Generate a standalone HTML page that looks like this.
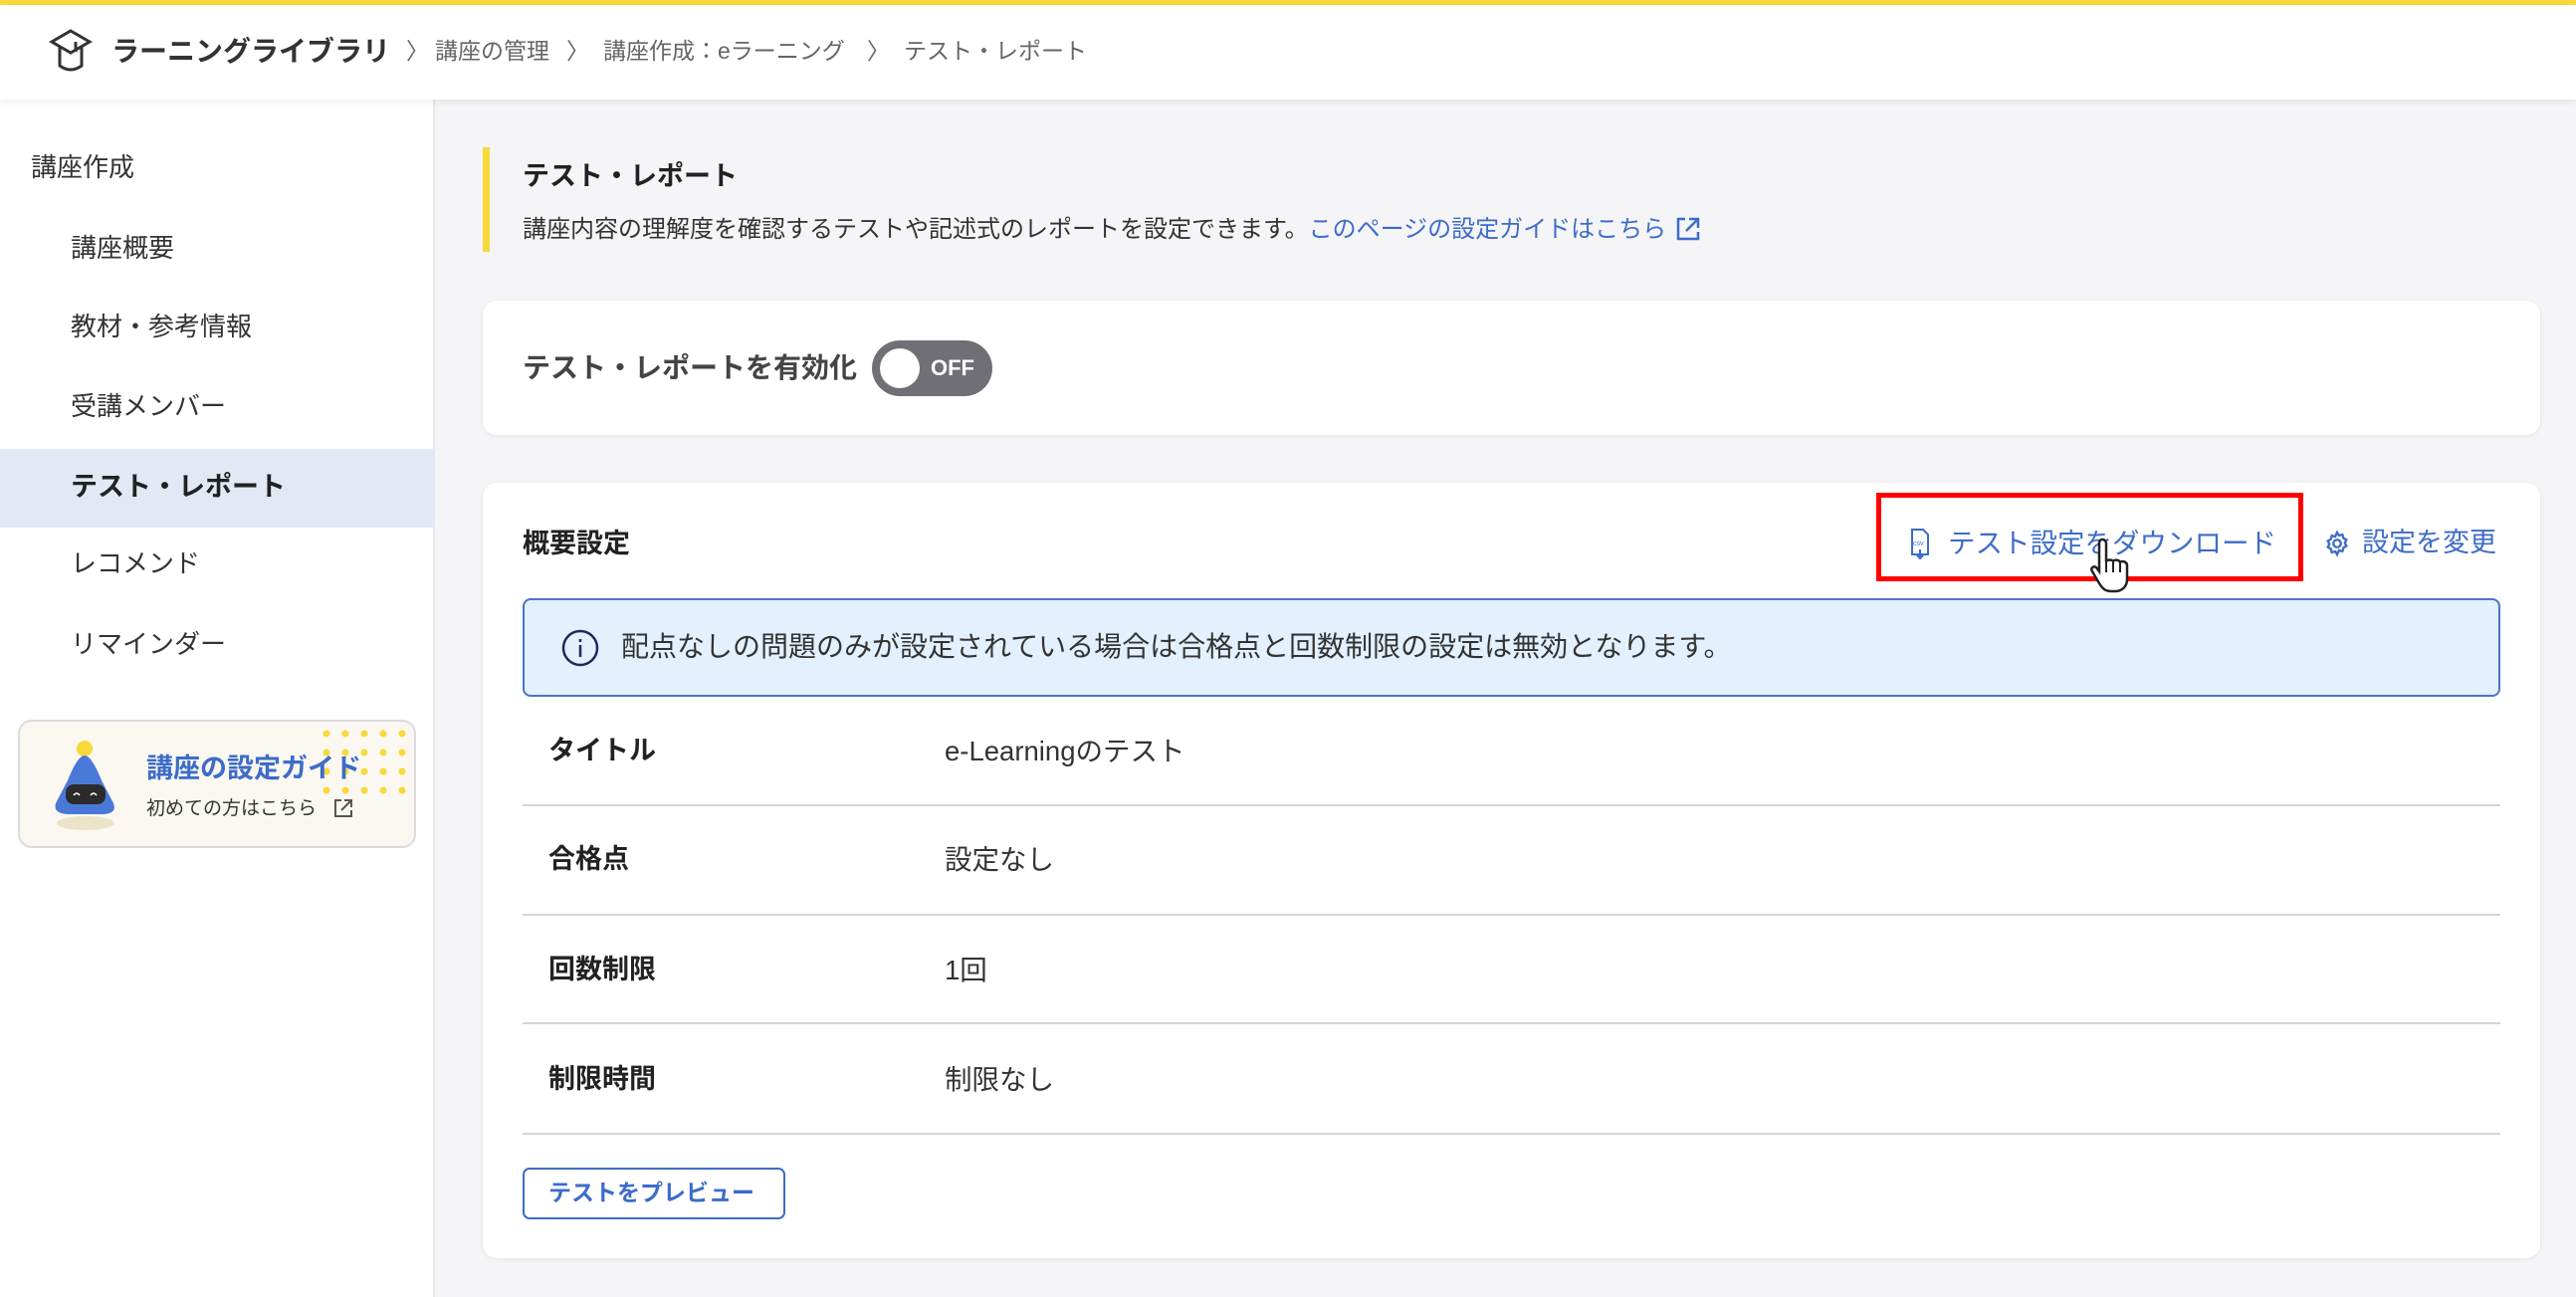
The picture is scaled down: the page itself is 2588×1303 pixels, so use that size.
<!DOCTYPE html>
<html><head><meta charset="utf-8"><style>
*{margin:0;padding:0;box-sizing:border-box}
body{width:2588px;height:1303px;overflow:hidden;background:#f5f5f7;font-family:"Liberation Sans","Noto Sans CJK JP",sans-serif;color:#222;position:relative}
.a{position:absolute;white-space:nowrap}
.t{line-height:1}
.bc{font-size:23px;color:#666;z-index:3;top:40px}
</style></head><body>
<div class="a" style="left:0;top:0;width:2588px;height:5px;background:#f7d93c"></div>
<div class="a" style="left:0;top:5px;width:2588px;height:95px;background:#fff;box-shadow:0 2px 6px rgba(0,0,0,.08);z-index:2"></div>
<svg class="a" style="left:48px;top:28px;z-index:3" width="46" height="48" viewBox="0 0 46 48" fill="none" stroke="#333" stroke-width="3"><path d="M23 3 L42 14 L23 25 L4 14 Z"/><path d="M12 19 V38 Q23 46 34 38 V19"/><path d="M28 14 V24" /></svg>
<div class="a t" style="left:112px;top:38px;font-size:28px;font-weight:bold;color:#333;z-index:3">ラーニングライブラリ</div>
<div class="a t bc" style="left:408px">〉</div>
<div class="a t bc" style="left:437px">講座の管理</div>
<div class="a t bc" style="left:569px">〉</div>
<div class="a t bc" style="left:606px">講座作成：eラーニング</div>
<div class="a t bc" style="left:871px">〉</div>
<div class="a t bc" style="left:908px">テスト・レポート</div>

<div class="a" style="left:0;top:100px;width:437px;height:1203px;background:#fff;border-right:2px solid #e8e8ea"></div>
<div class="a t" style="left:31px;top:155px;font-size:26px;color:#333">講座作成</div>
<div class="a t" style="left:71px;top:236px;font-size:26px;color:#333">講座概要</div>
<div class="a t" style="left:71px;top:315px;font-size:26px;color:#333">教材・参考情報</div>
<div class="a t" style="left:71px;top:395px;font-size:26px;color:#333">受講メンバー</div>
<div class="a" style="left:0;top:451px;width:437px;height:79px;background:#e3e8f5"></div>
<div class="a t" style="left:71px;top:476px;font-size:27px;font-weight:bold;color:#222">テスト・レポート</div>
<div class="a t" style="left:71px;top:553px;font-size:26px;color:#333">レコメンド</div>
<div class="a t" style="left:71px;top:634px;font-size:26px;color:#333">リマインダー</div>
<div class="a" style="left:18px;top:723px;width:400px;height:129px;background:#faf8f0;border:2px solid #dcdce0;border-radius:14px;overflow:hidden">
<svg class="a" style="left:300px;top:4px" width="100" height="80"><g fill="#f7d93c"><circle cx="8" cy="8" r="3.5"/><circle cx="27" cy="8" r="3.5"/><circle cx="46" cy="8" r="3.5"/><circle cx="65" cy="8" r="3.5"/><circle cx="84" cy="8" r="3.5"/><circle cx="8" cy="27" r="3.5"/><circle cx="27" cy="27" r="3.5"/><circle cx="46" cy="27" r="3.5"/><circle cx="65" cy="27" r="3.5"/><circle cx="84" cy="27" r="3.5"/><circle cx="8" cy="46" r="3.5"/><circle cx="27" cy="46" r="3.5"/><circle cx="46" cy="46" r="3.5"/><circle cx="65" cy="46" r="3.5"/><circle cx="84" cy="46" r="3.5"/><circle cx="8" cy="65" r="3.5"/><circle cx="27" cy="65" r="3.5"/><circle cx="46" cy="65" r="3.5"/><circle cx="65" cy="65" r="3.5"/><circle cx="84" cy="65" r="3.5"/></g></svg>
<svg class="a" style="left:28px;top:14px" width="80" height="100"><ellipse cx="38" cy="88" rx="29" ry="7" fill="#ece4c8"/><circle cx="37" cy="13" r="8" fill="#f7d93c"/><path d="M37 20 Q30 20 20 45 L8 68 Q5 78 20 79 L56 79 Q70 78 66 68 L54 45 Q44 20 37 20Z" fill="#4a78d6"/><rect x="18" y="49" width="40" height="20" rx="8" fill="#2b2b2b"/><path d="M26 60 q3-4 6 0 M43 60 q3-4 6 0" stroke="#fff" stroke-width="1.5" fill="none"/></svg>
<div class="a t" style="left:127px;top:34px;font-size:27px;font-weight:bold;color:#3d6cc9">講座の設定ガイド</div>
<div class="a t" style="left:127px;top:78px;font-size:19px;color:#333">初めての方はこちら</div>
<svg class="a" style="left:314px;top:76px" width="22" height="22" fill="none" stroke="#555" stroke-width="2"><path d="M9 3H3v16h16v-6M12 3h7v7M19 3 9 13"/></svg>
</div>

<div class="a" style="left:485px;top:148px;width:7px;height:105px;background:#f7d93c"></div>
<div class="a t" style="left:525px;top:164px;font-size:27px;font-weight:bold;color:#222">テスト・レポート</div>
<div class="a t" style="left:525px;top:219px;font-size:24px;color:#333">講座内容の理解度を確認するテストや記述式のレポートを設定できます。<span style="color:#3d6cc9">このページの設定ガイドはこちら</span></div>
<svg class="a" style="left:1682px;top:216px" width="28" height="28" fill="none" stroke="#3d6cc9" stroke-width="2.5"><path d="M11 4H4v20h20v-7M15 4h9v9M24 4 12 16"/></svg>

<div class="a" style="left:485px;top:302px;width:2067px;height:135px;background:#fff;border-radius:14px;box-shadow:0 1px 4px rgba(0,0,0,.08)"></div>
<div class="a t" style="left:525px;top:356px;font-size:28px;font-weight:bold;color:#444">テスト・レポートを有効化</div>
<div class="a" style="left:876px;top:342px;width:121px;height:56px;background:#6f6f75;border-radius:28px"></div>
<div class="a" style="left:884px;top:350px;width:40px;height:40px;background:#fff;border-radius:50%"></div>
<div class="a t" style="left:935px;top:359px;font-size:22px;font-weight:bold;color:#fff">OFF</div>

<div class="a" style="left:485px;top:485px;width:2067px;height:779px;background:#fff;border-radius:14px;box-shadow:0 1px 4px rgba(0,0,0,.08)"></div>
<div class="a t" style="left:525px;top:533px;font-size:27px;font-weight:bold;color:#222">概要設定</div>
<div class="a" style="left:1885px;top:495px;width:429px;height:89px;border:5px solid #f00"></div>
<svg class="a" style="left:1918px;top:530px" width="22" height="34" fill="none" stroke="#3d6cc9" stroke-width="2"><path d="M3 2h11l5 5v20H3Z"/><path d="M11 22v9M8 28l3 3 3-3"/><text x="4" y="18" font-size="7" fill="#3d6cc9" stroke="none" font-family="Liberation Sans">csv</text></svg>
<div class="a t" style="left:1957px;top:532px;font-size:27.5px;color:#3d6cc9">テスト設定をダウンロード</div>
<svg class="a" style="left:2334px;top:532px" width="28" height="28" viewBox="0 0 24 24" fill="none" stroke="#3d6cc9" stroke-width="2"><circle cx="12" cy="12" r="3.2"/><path d="M12 2.5l1.6 2.6 3-.8.8 3 2.6 1.6-1.4 2.6 1.4 2.6-2.6 1.6-.8 3-3-.8L12 21.5l-1.6-2.6-3 .8-.8-3L4 15.1l1.4-2.6L4 9.9l2.6-1.6.8-3 3 .8Z"/></svg>
<div class="a t" style="left:2373px;top:532px;font-size:27px;color:#3d6cc9">設定を変更</div>
<svg class="a" style="left:2098px;top:538px" width="44" height="62" viewBox="0 0 44 62"><path d="M14 4c3 0 4 2 4 4v18c1-2 6-2 7 0 1-2 6-2 7 1 1-2 7-1 7 3v14c0 7-5 12-12 12h-4c-6 0-9-3-12-8L4 36c-2-3 1-6 4-4l3 4V8c0-2 1-4 3-4Z" fill="#fff" stroke="#222" stroke-width="2.5"/><path d="M25 27v10M32 28v9M18 26v11" stroke="#222" stroke-width="2"/></svg>

<div class="a" style="left:525px;top:601px;width:1987px;height:99px;background:#e3f0fd;border:2px solid #4a74c9;border-radius:8px"></div>
<svg class="a" style="left:563px;top:631px" width="40" height="40" fill="none" stroke="#1e2a5a" stroke-width="2.5"><circle cx="20" cy="20" r="17"/><path d="M20 17v12M20 11v3"/></svg>
<div class="a t" style="left:624px;top:636px;font-size:28px;color:#333">配点なしの問題のみが設定されている場合は合格点と回数制限の設定は無効となります。</div>

<div class="a t" style="left:551px;top:741px;font-size:27px;font-weight:bold">タイトル</div>
<div class="a t" style="left:949px;top:741px;font-size:27.5px;color:#333">e-Learningのテスト</div>
<div class="a" style="left:525px;top:808px;width:1987px;height:2px;background:#d4d4d8"></div>
<div class="a t" style="left:551px;top:850px;font-size:27px;font-weight:bold">合格点</div>
<div class="a t" style="left:949px;top:850px;font-size:27.5px;color:#333">設定なし</div>
<div class="a" style="left:525px;top:918px;width:1987px;height:2px;background:#d4d4d8"></div>
<div class="a t" style="left:551px;top:961px;font-size:27px;font-weight:bold">回数制限</div>
<div class="a t" style="left:949px;top:961px;font-size:27.5px;color:#333">1回</div>
<div class="a" style="left:525px;top:1027px;width:1987px;height:2px;background:#d4d4d8"></div>
<div class="a t" style="left:551px;top:1071px;font-size:27px;font-weight:bold">制限時間</div>
<div class="a t" style="left:949px;top:1071px;font-size:27.5px;color:#333">制限なし</div>
<div class="a" style="left:525px;top:1138px;width:1987px;height:2px;background:#d4d4d8"></div>
<div class="a" style="left:525px;top:1173px;width:264px;height:52px;border:2px solid #3d6cc9;border-radius:7px"></div>
<div class="a t" style="left:551px;top:1187px;font-size:23px;font-weight:bold;color:#3d6cc9">テストをプレビュー</div>
</body></html>
